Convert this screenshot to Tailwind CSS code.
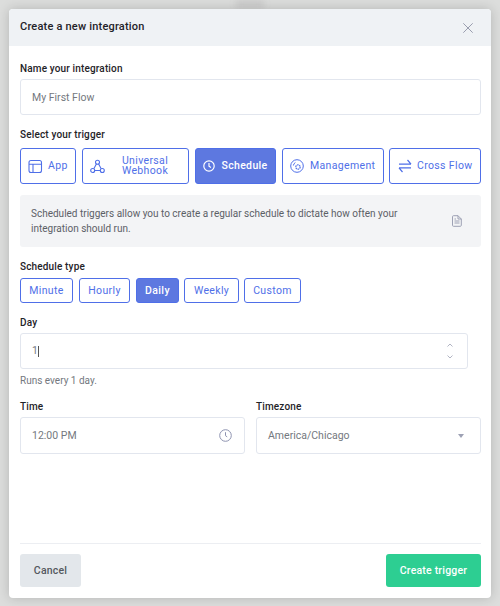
<!DOCTYPE html>
<html lang="en">
  <head>
    <meta charset="UTF-8" />
    <meta name="viewport" content="width=device-width, initial-scale=1.0" />
    <title>Create a new integration</title>
    <script src="https://cdn.jsdelivr.net/npm/@tailwindcss/browser@4"></script>
  </head>
  <body class="relative bg-[#dcdddc] h-[606px] w-[500px] overflow-hidden font-['Roboto',sans-serif]">
    <!-- Page content showing behind the modal -->
    <div class="absolute left-[236px] top-0 w-[28px] h-[8px] bg-[#cbcbcb] blur-[3px]"></div>

    <div class="relative pt-[9px] pl-[9px]">
      <div class="w-[482px] h-[589px] bg-white rounded-[4px] shadow-[0_0_12px_rgba(0,0,0,0.18)] overflow-hidden flex flex-col">
        <!-- Header -->
        <div class="h-[37px] bg-[#eff2f5] flex items-center justify-between pl-[11px] pr-[18px]">
          <h1 class="text-[11px] font-medium text-[#1f2328] tracking-[0.2px]">Create a new integration</h1>
          <svg class="w-[10px] h-[10px] text-[#8e93a6]" viewBox="0 0 10 10" fill="none" stroke="currentColor" stroke-width="0.9">
            <path d="M0.300 0.300l9.400 9.400M9.700 0.300L0.300 9.700" />
          </svg>
        </div>

        <div class="flex-1 flex flex-col pl-[11px] pr-[10px]">
          <!-- Name -->
          <label class="mt-[16px] h-[13px] leading-[14px] text-[10px] font-medium text-[#1f2328] tracking-[0.15px]">Name your integration</label>
          <div class="mt-[4px] h-[36px] border border-[#e2e6ee] rounded-[3px] flex items-center pl-[11px] pt-[1px] text-[10.500px] text-[#74787e]">My First Flow</div>

          <!-- Trigger -->
          <label class="mt-[13px] h-[13px] leading-[14px] text-[10px] font-medium text-[#1f2328] tracking-[0.15px]">Select your trigger</label>
          <div class="mt-[7px] flex gap-[6px] h-[36px] text-[10.500px] tracking-[0.35px] text-[#4f6fe8]">
            <div class="w-[56px] border border-[#4f6fe8] rounded-[3px] flex items-center pl-[7px] gap-[5px]">
              <svg class="w-[15px] h-[15px]" viewBox="0 0 15 15" fill="none" stroke="currentColor" stroke-width="1.100">
                <rect x="1" y="1.500" width="12.500" height="12" rx="2" />
                <path d="M1 5.200h12.500M5 5.200v8.300" />
              </svg>
              <span>App</span>
            </div>
            <div class="w-[107px] border border-[#4f6fe8] rounded-[3px] flex items-center pl-[7px]">
              <svg class="w-[15px] h-[15px] shrink-0" viewBox="0 0 15 15" fill="none" stroke="currentColor" stroke-width="1.100">
                <circle cx="7.500" cy="3.200" r="2" />
                <circle cx="2.700" cy="11.500" r="2" />
                <circle cx="12.300" cy="11.500" r="2" />
                <path d="M6.400 5L3.800 9.700M8.600 5l2.600 4.700M4.700 11.500h5.600" />
              </svg>
              <span class="flex-1 text-center leading-[10px] pl-[2px] pr-[5px]">Universal Webhook</span>
            </div>
            <div class="w-[81px] bg-[#5d78e0] border border-[#4f6fe8] rounded-[3px] flex items-center justify-center gap-[6px] font-medium text-white">
              <svg class="w-[12px] h-[12px]" viewBox="0 0 12 12" fill="none" stroke="currentColor" stroke-width="1.200">
                <circle cx="6" cy="6" r="5.200" />
                <path d="M6 3v3.200l2 1.200" />
              </svg>
              <span>Schedule</span>
            </div>
            <div class="w-[102px] border border-[#4f6fe8] rounded-[3px] flex items-center pl-[7px] gap-[6px]">
              <svg class="w-[14px] h-[14px] shrink-0" viewBox="0 0 14 14" fill="none" stroke="currentColor" stroke-width="1">
                <circle cx="7" cy="7" r="6.300" />
                <circle cx="8" cy="8" r="2.200" stroke-dasharray="1.500 0.600" stroke-width="1.200" />
                <path d="M3.400 6.500a4 4 0 0 1 2-3" />
              </svg>
              <span>Management</span>
            </div>
            <div class="w-[92px] -ml-px border border-[#4f6fe8] rounded-[3px] flex items-center pl-[8px] gap-[5px]">
              <svg class="w-[14px] h-[14px] shrink-0" viewBox="0 0 14 14" fill="none" stroke="currentColor" stroke-width="1.200">
                <path d="M1 5.200h12M9.500 1l3.500 4.200M13 8.800H1M4.500 13L1 8.800" />
              </svg>
              <span>Cross Flow</span>
            </div>
          </div>

          <!-- Info -->
          <div class="mt-[11px] h-[52px] bg-[#f3f4f6] rounded-[3px] flex items-center justify-between pl-[11px] pr-[19px]">
            <p class="w-[400px] text-[10px] leading-[15px] text-[#5c6066]">Scheduled triggers allow you to create a regular schedule to dictate how often your integration should run.</p>
            <svg class="w-[10px] h-[12px] text-[#9da1b4]" viewBox="0 0 10 12" fill="none" stroke="currentColor" stroke-width="1">
              <path d="M1.500 0.700h4.500l3.300 3.300v6.300a1 1 0 0 1-1 1H1.500a1 1 0 0 1-1-1V1.700a1 1 0 0 1 1-1zM6 0.700V4h3.300M2.500 6h5M2.500 8h5M2.500 4h1.500" />
            </svg>
          </div>

          <!-- Schedule type -->
          <label class="mt-[13px] h-[13px] leading-[14px] text-[10px] font-medium text-[#1f2328] tracking-[0.15px]">Schedule type</label>
          <div class="mt-[5px] flex gap-[6px] h-[25px] text-[10.500px] tracking-[0.35px] text-[#4f6fe8]">
            <div class="w-[53px] border border-[#4f6fe8] rounded-[3px] flex items-center justify-center">Minute</div>
            <div class="w-[51px] border border-[#4f6fe8] rounded-[3px] flex items-center justify-center">Hourly</div>
            <div class="w-[43px] bg-[#5d78e0] border border-[#4f6fe8] rounded-[3px] flex items-center justify-center font-medium text-white">Daily</div>
            <div class="w-[55px] -ml-px border border-[#4f6fe8] rounded-[3px] flex items-center justify-center">Weekly</div>
            <div class="w-[57px] -ml-px border border-[#4f6fe8] rounded-[3px] flex items-center justify-center">Custom</div>
          </div>

          <!-- Day -->
          <label class="mt-[13px] h-[13px] leading-[14px] text-[10px] font-medium text-[#1f2328] tracking-[0.15px]">Day</label>
          <div class="mt-[4px] w-[448px] h-[36px] border border-[#e2e6ee] rounded-[3px] flex items-center justify-between pl-[11px] pr-[14px] text-[10.500px] text-[#74787e]">
            <div class="flex items-center">
              <span>1</span>
              <span class="w-px h-[11px] bg-[#555]"></span>
            </div>
            <div class="flex flex-col gap-[8px]">
              <svg class="w-[6px] h-[4px] text-[#9da1b4]" viewBox="0 0 6 4" fill="none" stroke="currentColor" stroke-width="0.800"><path d="M0.500 3.500L3 1l2.500 2.500" /></svg>
              <svg class="w-[6px] h-[4px] text-[#9da1b4]" viewBox="0 0 6 4" fill="none" stroke="currentColor" stroke-width="0.800"><path d="M0.500 0.500L3 3l2.500-2.500" /></svg>
            </div>
          </div>
          <p class="mt-[5px] h-[14px] leading-[14px] text-[10px] text-[#74787e]">Runs every 1 day.</p>

          <!-- Time and timezone -->
          <div class="mt-[11px] grid grid-cols-2 gap-[11px]">
            <div class="flex flex-col">
              <label class="mt-[1px] h-[13px] leading-[14px] text-[10px] font-medium text-[#1f2328] tracking-[0.15px]">Time</label>
              <div class="mt-[4px] h-[37px] border border-[#e2e6ee] rounded-[3px] flex items-center justify-between pl-[11px] pr-[12px] text-[10.500px] text-[#74787e]">
                <span>12:00 PM</span>
                <svg class="w-[13px] h-[13px] text-[#8e93b0]" viewBox="0 0 13 13" fill="none" stroke="currentColor" stroke-width="1">
                  <circle cx="6.500" cy="6.500" r="5.800" />
                  <path d="M6.500 3.200v3.500l1.700 1.200" />
                </svg>
              </div>
            </div>
            <div class="flex flex-col">
              <label class="mt-[1px] h-[13px] leading-[14px] text-[10px] font-medium text-[#1f2328] tracking-[0.15px]">Timezone</label>
              <div class="mt-[4px] h-[37px] border border-[#e2e6ee] rounded-[3px] flex items-center justify-between pl-[11px] pr-[16px] text-[10.500px] text-[#74787e]">
                <span>America/Chicago</span>
                <span class="w-0 h-0 border-l-[3px] border-r-[3px] border-t-[4px] border-l-transparent border-r-transparent border-t-[#9da1b4]"></span>
              </div>
            </div>
          </div>

          <!-- Footer -->
          <div class="mt-auto mb-[11px] border-t border-[#eceef2] pt-[10px] flex justify-between">
            <button class="w-[61px] h-[33px] bg-[#e3e7eb] rounded-[3px] text-[10.500px] font-medium text-[#54585e] tracking-[0.2px]">Cancel</button>
            <button class="w-[95px] h-[33px] bg-[#2dce92] rounded-[3px] text-[10.500px] font-medium text-white tracking-[0.2px]">Create trigger</button>
          </div>
        </div>
      </div>
    </div>
  </body>
</html>
